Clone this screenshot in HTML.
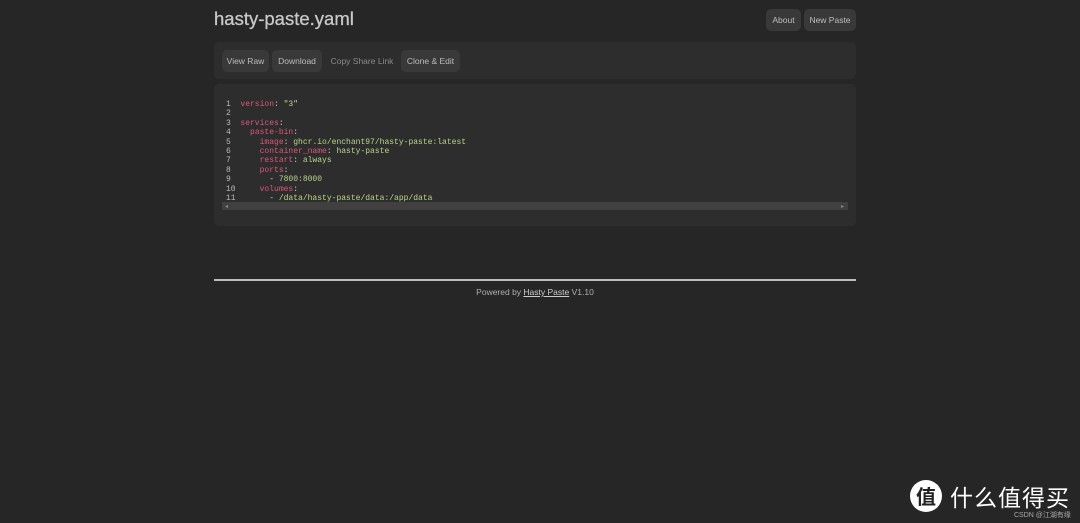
<!DOCTYPE html>
<html><head><style>
body{margin:0;background:#262626;width:1080px;height:523px;overflow:hidden;font-family:"Liberation Sans",sans-serif;position:relative}
.a{position:absolute}
.btn{position:absolute;background:#393939;color:#bdbdbd;font-size:8.5px;border-radius:5px;text-align:center;box-sizing:border-box}
.code{font-family:"Liberation Mono",monospace;font-size:8px;line-height:9.4px;color:#d0d0d0;white-space:pre}
.k{color:#d9587a}.s{color:#b9d68a}.n{color:#bbb}
</style></head><body>
<div class="a" style="left:214px;top:8px;font-size:18.5px;color:#c8c8c8;-webkit-text-stroke:0.3px #c8c8c8">hasty-paste.yaml</div>
<div class="btn" style="left:766px;top:9px;width:35px;height:22px;line-height:22px">About</div>
<div class="btn" style="left:804px;top:9px;width:52px;height:22px;line-height:22px">New Paste</div>
<div class="a" style="left:214px;top:42px;width:642px;height:37px;background:#2d2d2d;border-radius:5px"></div>
<div class="btn" style="left:222px;top:50px;width:47px;height:22px;line-height:22px">View Raw</div>
<div class="btn" style="left:272px;top:50px;width:50px;height:22px;line-height:22px">Download</div>
<div class="btn" style="left:326px;top:50px;width:72px;height:22px;line-height:22px;background:none;color:#8a8a8a">Copy Share Link</div>
<div class="btn" style="left:401px;top:50px;width:59px;height:22px;line-height:22px">Clone &amp; Edit</div>
<div class="a" style="left:214px;top:84px;width:642px;height:142px;background:#2d2d2d;border-radius:5px"></div>
<div class="a code" style="left:226px;top:100px"><span class="n">1  </span><span class="k">version</span>: <span class="s">"3"</span>
<span class="n">2</span>
<span class="n">3  </span><span class="k">services</span>:
<span class="n">4    </span><span class="k">paste-bin</span>:
<span class="n">5      </span><span class="k">image</span>: <span class="s">ghcr.io/enchant97/hasty-paste:latest</span>
<span class="n">6      </span><span class="k">container_name</span>: <span class="s">hasty-paste</span>
<span class="n">7      </span><span class="k">restart</span>: <span class="s">always</span>
<span class="n">8      </span><span class="k">ports</span>:
<span class="n">9        </span>- <span class="s">7800:8000</span>
<span class="n">10     </span><span class="k">volumes</span>:
<span class="n">11       </span>- <span class="s">/data/hasty-paste/data:/app/data</span></div>
<div class="a" style="left:222px;top:202px;width:626px;height:8px;background:#404040"></div>
<div class="a" style="left:225px;top:203px;font-size:6px;color:#888">◂</div>
<div class="a" style="left:841px;top:203px;font-size:6px;color:#888">▸</div>
<div class="a" style="left:214px;top:279px;width:642px;height:2px;background:#bdbdbd"></div>
<div class="a" style="left:0;width:1070px;top:287px;text-align:center;font-size:8.5px;color:#b0b0b0">Powered by <u style="color:#ccc">Hasty Paste</u> V1.10</div>
<div class="a" style="left:910px;top:480px;width:32px;height:32px;border-radius:50%;background:#fff;color:#222;font-family:'Noto Sans CJK SC',sans-serif;font-size:20px;line-height:32px;text-align:center;font-weight:bold">值</div>
<div class="a" style="left:950px;top:479px;color:#fff;font-family:'Noto Sans CJK SC',sans-serif;font-size:23px;line-height:34px;letter-spacing:1px">什么值得买</div>
<div class="a" style="left:1014px;top:510px;color:#aaa;font-family:'Liberation Sans','Noto Sans CJK SC',sans-serif;font-size:7px">CSDN @江湖有缘</div>
</body></html>
